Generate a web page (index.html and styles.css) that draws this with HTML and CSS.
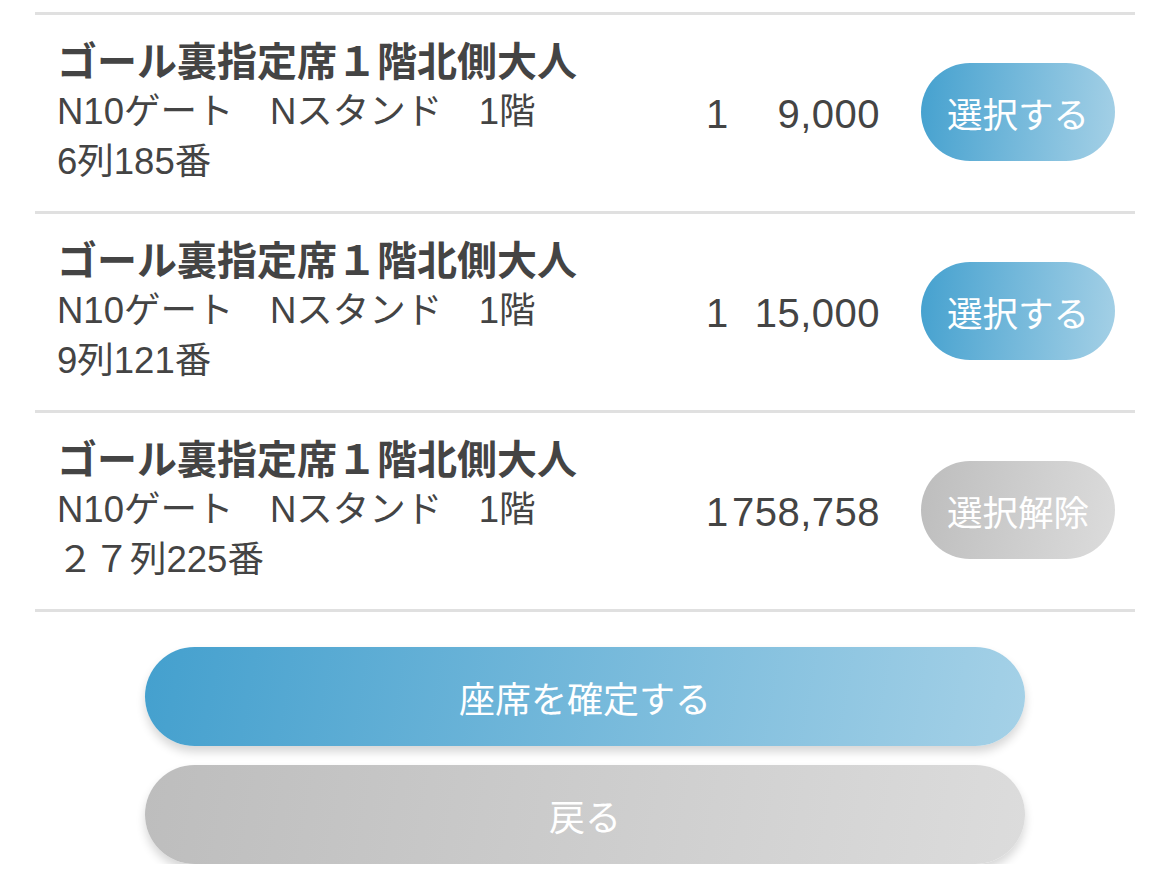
FILE: index.html
```html
<!DOCTYPE html>
<html lang="ja">
<head>
    <meta charset="UTF-8">
    <meta name="viewport" content="width=device-width, initial-scale=1.0">
    <title>座席選択</title>
    <link rel="stylesheet" href="styles.css">
</head>
<body>
    <!-- Seat list -->
    <div class="seat-list">
        <div class="seat-row">
            <div class="seat-info">
                <div class="seat-name">ゴール裏指定席１階北側大人</div>
                <div class="seat-line">N10ゲート　Nスタンド　1階</div>
                <div class="seat-line">6列185番</div>
            </div>
            <div class="seat-amount">
                <span class="qty">1</span>
                <span class="price">9,000</span>
            </div>
            <button class="pick-btn">選択する</button>
        </div>
        <div class="seat-row">
            <div class="seat-info">
                <div class="seat-name">ゴール裏指定席１階北側大人</div>
                <div class="seat-line">N10ゲート　Nスタンド　1階</div>
                <div class="seat-line">9列121番</div>
            </div>
            <div class="seat-amount">
                <span class="qty">1</span>
                <span class="price">15,000</span>
            </div>
            <button class="pick-btn">選択する</button>
        </div>
        <div class="seat-row">
            <div class="seat-info">
                <div class="seat-name">ゴール裏指定席１階北側大人</div>
                <div class="seat-line">N10ゲート　Nスタンド　1階</div>
                <div class="seat-line">２７列225番</div>
            </div>
            <div class="seat-amount">
                <span class="qty">1</span>
                <span class="price">758,758</span>
            </div>
            <button class="pick-btn selected">選択解除</button>
        </div>
    </div>

    <!-- Actions -->
    <div class="actions">
        <button class="big-btn confirm">座席を確定する</button>
        <button class="big-btn back">戻る</button>
    </div>
</body>
</html>
```

FILE: styles.css
```css
body, html {
    margin: 0;
    padding: 0;
    background: #fff;
    font-family: "Liberation Sans", "Noto Sans CJK JP", sans-serif;
    color: #444;
}
/* Seat list */
.seat-list {
    margin: 12px 35px 0 35px;
    border-top: 3px solid #e0e0e0;
}
.seat-row {
    display: flex;
    align-items: center;
    padding: 22px 20px 24px 22px;
    border-bottom: 3px solid #e0e0e0;
}
.seat-info {
    flex: 1;
}
.seat-name {
    font-size: 40px;
    font-weight: bold;
    line-height: 50px;
}
.seat-line {
    font-size: 36.5px;
    line-height: 50px;
}
.seat-amount {
    display: flex;
    width: 174px;
    font-size: 40px;
    letter-spacing: 0.5px;
    margin-top: 4px;
}
.qty {
    width: 24px;
}
.price {
    flex: 1;
    text-align: right;
}
button {
    font-family: "Noto Sans CJK JP", sans-serif;
    border: none;
    color: #fff;
    cursor: pointer;
}
.pick-btn {
    width: 194px;
    height: 98px;
    margin-left: 41px;
    border-radius: 49px;
    font-size: 35.5px;
    padding: 0;
    background: linear-gradient(95deg, #45a1cf, #a4d0e6);
}
.pick-btn.selected {
    background: linear-gradient(100deg, #bdbdbd, #dcdcdc);
}
/* Bottom buttons */
.actions {
    display: flex;
    flex-direction: column;
    align-items: center;
    gap: 19px;
    margin-top: 35px;
}
.big-btn {
    width: 880px;
    height: 99px;
    border-radius: 50px;
    font-size: 36px;
    box-shadow: 0 6px 10px rgba(0, 0, 0, 0.16);
}
.confirm {
    background: linear-gradient(100deg, #44a0ce, #a5d1e7);
}
.back {
    background: linear-gradient(100deg, #bdbdbd, #dcdcdc);
}
```
